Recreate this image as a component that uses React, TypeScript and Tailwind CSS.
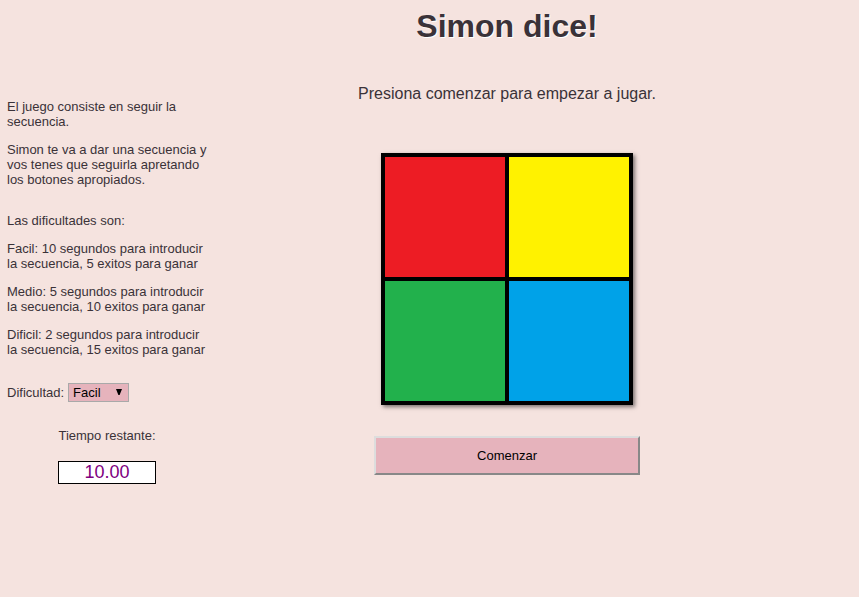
import { useState } from "react";

const colors = [
  { name: "Rojo", className: "bg-[#ed1c24]" },
  { name: "Amarillo", className: "bg-[#fff200]" },
  { name: "Verde", className: "bg-[#22b14c]" },
  { name: "Azul", className: "bg-[#00a2e8]" },
];

function Instructions() {
  return (
    <div className="flex flex-col gap-[26px]">
      <div className="flex flex-col gap-[13px]">
        <p>El juego consiste en seguir la secuencia.</p>
        <p>Simon te va a dar una secuencia y vos tenes que seguirla apretando los botones apropiados.</p>
      </div>
      <div className="flex flex-col gap-[13px]">
        <p>Las dificultades son:</p>
        <p>Facil: 10 segundos para introducir la secuencia, 5 exitos para ganar</p>
        <p>Medio: 5 segundos para introducir la secuencia, 10 exitos para ganar</p>
        <p>Dificil: 2 segundos para introducir la secuencia, 15 exitos para ganar</p>
      </div>
    </div>
  );
}

function Difficulty() {
  const [value, setValue] = useState("Facil");
  return (
    <div className="mt-[26px] flex items-center gap-1">
      <label htmlFor="dificultad">Dificultad:</label>
      <div className="relative">
        <select
          id="dificultad"
          value={value}
          onChange={(e) => setValue(e.target.value)}
          className="block h-[19px] w-[61px] appearance-none border border-[#a9a9a9] bg-[#e6b3bc] pl-1 text-[13px] leading-4 text-black"
        >
          <option>Facil</option>
          <option>Medio</option>
          <option>Dificil</option>
        </select>
        <svg viewBox="0 0 6 6" className="pointer-events-none absolute top-1.5 right-[7px] size-1.5" aria-hidden="true">
          <path d="M0 0h6L3.6 6H2.4z" fill="#000" />
        </svg>
      </div>
    </div>
  );
}

export default function App() {
  return (
    <div className="flex min-h-screen bg-[#f5e3df] pl-[7px] font-['Liberation_Sans',Arial,sans-serif] text-[#3a3238]">
      <aside className="w-[200px] shrink-0 pt-[99px] text-[13px] leading-[15px]">
        <Instructions />
        <Difficulty />
        <div className="mt-[26px] flex flex-col items-center gap-[18px]">
          <label htmlFor="tiempo">Tiempo restante:</label>
          <input
            id="tiempo"
            readOnly
            value="10.00"
            className="h-[23px] w-[98px] border border-black bg-white text-center text-lg leading-5 text-[purple]"
          />
        </div>
      </aside>
      <main className="flex max-w-[600px] flex-1 flex-col items-center pt-2">
        <h1 className="text-[32px] leading-9 font-bold [text-shadow:1px_1px_0_white]">Simon dice!</h1>
        <p className="mt-10 text-base leading-5">Presiona comenzar para empezar a jugar.</p>
        <div className="mt-[49px] grid grid-cols-2 gap-1 border-4 border-black bg-black shadow-[2px_2px_4px_rgba(0,0,0,0.5)]">
          {colors.map((c) => (
            <button key={c.name} type="button" aria-label={c.name} className={`size-[120px] ${c.className}`} />
          ))}
        </div>
        <button
          type="button"
          className="mt-[31px] h-[39px] w-[266px] border-2 border-t-[#dddddd] border-r-[#888888] border-b-[#888888] border-l-[#dddddd] bg-[#e6b3bc] text-[13px] text-black"
        >
          Comenzar
        </button>
      </main>
    </div>
  );
}
